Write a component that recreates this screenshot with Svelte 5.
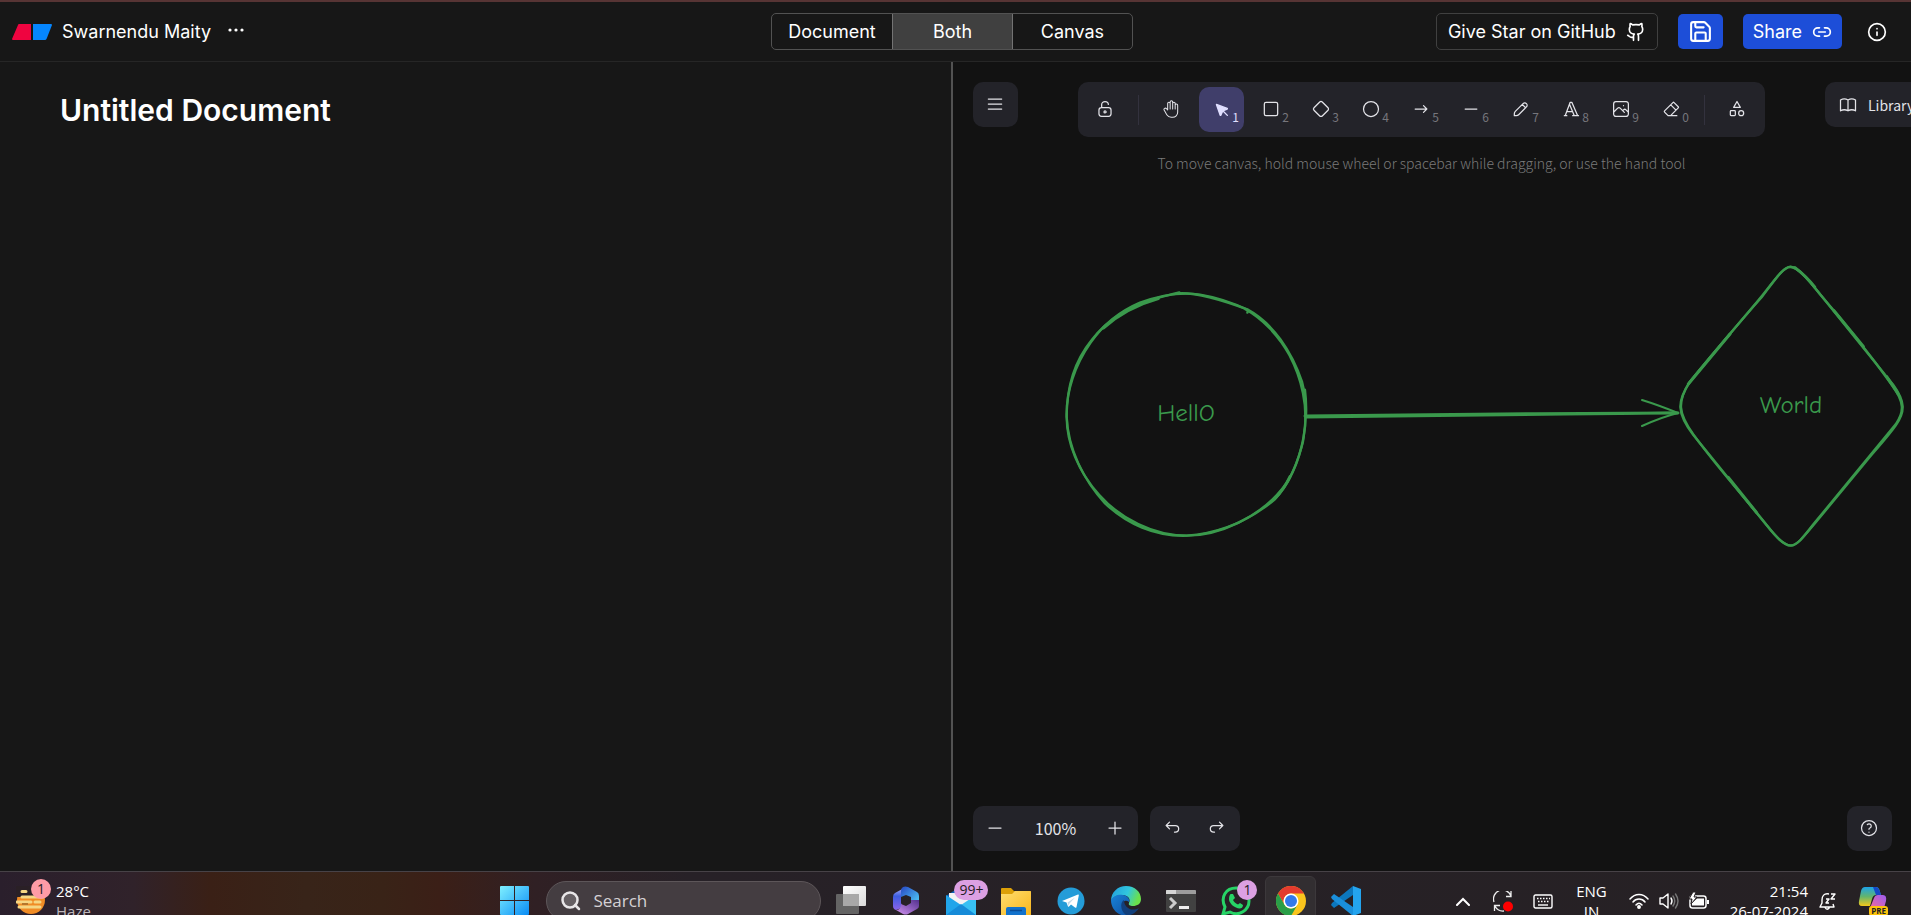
<script>
  let view = $state('Both');
  let tool = $state('Selection');
  const views = ['Document', 'Both', 'Canvas'];

  const tools = [
    { name: 'Selection', key: '1', box: 22, fill: true, d: 'M6 6l4.153 11.793a.365.365 0 0 0 .331.207a.366.366 0 0 0 .332-.207l2.184-4.793l4.787-1.994a.355.355 0 0 0 .213-.323a.355.355 0 0 0-.213-.323zM13.5 13.5l4.5 4.5' },
    { name: 'Rectangle', key: '2', box: 24, d: 'M6 4h12a2 2 0 0 1 2 2v12a2 2 0 0 1-2 2H6a2 2 0 0 1-2-2V6a2 2 0 0 1 2-2z' },
    { name: 'Diamond', key: '3', box: 24, d: 'M10.5 20.4l-6.9-6.9c-.781-.781-.781-2.219 0-3l6.9-6.9c.781-.781 2.219-.781 3 0l6.9 6.9c.781.781.781 2.219 0 3l-6.9 6.9c-.781.781-2.219.781-3 0z' },
    { name: 'Ellipse', key: '4', box: 24, d: 'M12 3a9 9 0 1 0 0 18a9 9 0 1 0 0-18z' },
    { name: 'Arrow', key: '5', box: 20, d: 'M4.167 10h11.666M12.5 13.333L15.833 10M12.5 6.667L15.833 10' },
    { name: 'Line', key: '6', box: 20, d: 'M4.167 10h11.666' },
    { name: 'Draw', key: '7', box: 20, d: 'M7.643 15.69l7.774-7.773a2.357 2.357 0 1 0-3.334-3.334L4.31 12.357a3.333 3.333 0 0 0-.977 2.357v1.953h1.953c.884 0 1.732-.352 2.357-.977ZM11.25 5.417l3.333 3.333' },
    { name: 'Text', key: '8', box: 24, d: 'M4 20h3M14 20h7M6.9 15h6.9M10.2 6.3l5.8 13.7M5 20l6-16h2l7 16' },
    { name: 'Image', key: '9', box: 20, d: 'M12.5 6.667h.01M4.91 2.625h10.18a2.284 2.284 0 0 1 2.285 2.284v10.182a2.284 2.284 0 0 1-2.284 2.284H4.909a2.284 2.284 0 0 1-2.284-2.284V4.909a2.284 2.284 0 0 1 2.284-2.284ZM3.333 12.5l3.334-3.333c.773-.745 1.726-.745 2.5 0l4.166 4.166M11.667 11.667l.833-.834c.774-.744 1.726-.744 2.5 0l1.667 1.667' },
    { name: 'Eraser', key: '0', box: 24, d: 'M19 20h-10.5l-4.21-4.3a1 1 0 0 1 0-1.41l10-10a1 1 0 0 1 1.41 0l5 5a1 1 0 0 1 0 1.41l-9.2 9.3M18 13.3l-6.3-6.3' }
  ];

  const paths = {
    lock: 'M13.542 8.542H6.458a2.5 2.5 0 0 0-2.5 2.5v3.75a2.5 2.5 0 0 0 2.5 2.5h7.084a2.5 2.5 0 0 0 2.5-2.5v-3.75a2.5 2.5 0 0 0-2.5-2.5ZM10 13.958a1.042 1.042 0 1 0 0-2.083a1.042 1.042 0 0 0 0 2.083ZM6.667 8.333V5.417C6.667 3.806 8.159 2.5 10 2.5c1.841 0 3.333 1.306 3.333 2.917',
    hand: 'M8 13v-7.5a1.5 1.5 0 0 1 3 0v6.5M11 5.5v-2a1.5 1.5 0 1 1 3 0v8.5M14 5.5a1.5 1.5 0 0 1 3 0v6.5M17 7.5a1.5 1.5 0 0 1 3 0v8.5a6 6 0 0 1-6 6h-2h.208a6 6 0 0 1-5.012-2.7l-.196-.3c-.312-.479-1.407-2.388-3.286-5.728a1.5 1.5 0 0 1 .536-2.022a1.867 1.867 0 0 1 2.28.28l1.47 1.47',
    shapes: 'M12 3l-4 7h8zM20 17a3 3 0 1 1-6 0a3 3 0 1 1 6 0zM5 14h4a1 1 0 0 1 1 1v4a1 1 0 0 1-1 1H5a1 1 0 0 1-1-1v-4a1 1 0 0 1 1-1z',
    book: 'M3 19a9 9 0 0 1 9 0a9 9 0 0 1 9 0M3 6a9 9 0 0 1 9 0a9 9 0 0 1 9 0M3 6v13M12 6v13M21 6v13',
    menu: 'M4 6h16M4 12h16M4 18h16',
    minus: 'M4 10h12',
    plus: 'M10 4v12M4 10h12',
    undo: 'M7.5 10.833L4.167 7.5L7.5 4.167M4.167 7.5h9.166a3.333 3.333 0 0 1 0 6.667H12.5',
    redo: 'M12.5 10.833L15.833 7.5L12.5 4.167M15.833 7.5H6.667a3.333 3.333 0 1 0 0 6.667H7.5',
    help: 'M12 3a9 9 0 1 0 0 18a9 9 0 1 0 0-18zM12 17v.01M12 13.5a1.5 1.5 0 0 1 1-1.5a2.6 2.6 0 1 0-3-4',
    github: 'M15 22v-4a4.8 4.8 0 0 0-1-3.5c3 0 6-2 6-5.5.08-1.25-.27-2.48-1-3.5.28-1.15.28-2.35 0-3.5 0 0-1 0-3 1.5-2.64-.5-5.36-.5-8 0C6 2 5 2 5 2c-.3 1.15-.3 2.35 0 3.5A5.403 5.403 0 0 0 4 9c0 3.5 3 5.5 6 5.5-.39.49-.68 1.05-.85 1.65-.17.6-.22 1.23-.15 1.85v4M9 18c-4.51 2-5-2-7-2',
    save: 'M15.2 3a2 2 0 0 1 1.4.6l3.8 3.8a2 2 0 0 1 .6 1.4V19a2 2 0 0 1-2 2H5a2 2 0 0 1-2-2V5a2 2 0 0 1 2-2zM17 21v-7a1 1 0 0 0-1-1H8a1 1 0 0 0-1 1v7M7 3v4a1 1 0 0 0 1 1h7',
    link: 'M9 17H7A5 5 0 0 1 7 7h2M15 7h2a5 5 0 1 1 0 10h-2M8 12h8',
    info: 'M12 2a10 10 0 1 0 0 20a10 10 0 1 0 0-20zM12 16v-4M12 8h.01'
  };
</script>

{#snippet icon(d, box = 24, size = 20, weight = 1.5)}
  <svg width={size} height={size} viewBox="0 0 {box} {box}" fill="none" stroke="currentColor" stroke-width={weight} stroke-linecap="round" stroke-linejoin="round" aria-hidden="true"><path {d} /></svg>
{/snippet}

<div class="screen">
  <header>
    <div class="brand">
      <svg width="40" height="16" viewBox="0 0 40 16" aria-hidden="true">
        <path d="M7 0H19V16H1Q0 16 0 15L6 1Q6.300 0 7 0z" fill="#ef0440" />
        <path d="M21 0H39Q40 0 40 1L34.500 15Q34 16 33 16H21z" fill="#0586ff" />
      </svg>
      <span class="owner">Swarnendu Maity</span>
      <button class="plain more" aria-label="More">
        <svg width="16" height="4" viewBox="0 0 16 4" fill="#fff"><circle cx="2" cy="2" r="1.600" /><circle cx="8" cy="2" r="1.600" /><circle cx="14" cy="2" r="1.600" /></svg>
      </button>
    </div>
    <div class="views">
      {#each views as name}
        <button class:active={view === name} onclick={() => (view = name)}>{name}</button>
      {/each}
    </div>
    <div class="actions">
      <a class="star" href="#github">Give Star on GitHub {@render icon(paths.github, 24, 20, 2)}</a>
      <button class="blue save" aria-label="Save">{@render icon(paths.save, 24, 25, 2)}</button>
      <button class="blue share">Share {@render icon(paths.link, 24, 20, 2)}</button>
      <button class="plain info" aria-label="Info">{@render icon(paths.info, 24, 20, 2)}</button>
    </div>
  </header>

  <main>
    <section class="document"><h1>Untitled Document</h1></section>
    <div class="divider"></div>
    <section class="canvas">
      <svg class="drawing" fill="none" stroke="#3a994c" stroke-linecap="round" stroke-linejoin="round">
        <svg x="87" y="208" width="300" height="280" viewBox="0 0 900 840" stroke-width="7">
          <path d="M402 72C450 62 530 84 622 118C700 160 755 245 786 335C802 395 800 450 789 515C775 570 755 620 728 655C660 740 540 797 440 797C340 797 240 745 178 675C115 605 80 520 80 440C80 350 106 270 155 210C205 145 280 105 345 86C375 78 395 73 418 67" />
          <path d="M622 128L624 120C590 104 530 82 480 74C420 65 360 76 300 98C230 128 185 170 152 218C105 285 78 365 80 440C84 535 130 630 195 700C260 762 345 800 440 797C540 790 630 750 702 690C745 645 776 580 791 500C808 410 782 320 748 255C715 195 665 145 616 118" />
          <path d="M355 86C290 104 235 135 190 174M794 360Q799 400 797 440M750 620C737 648 720 670 704 687" stroke-width="9" />
        </svg>
        <path d="M352 354C480 353 600 351 725 351M353 355C490 353 600 352 722 351" stroke-width="3" />
        <path d="M689 338C702 342 715 347 725 351C713 354 700 359 689 364" stroke-width="2" />
        <svg x="667" y="188" width="291" height="310" viewBox="0 0 873 930" stroke-width="7">
          <path d="M420 145C465 88 490 51 511 51C532 51 560 82 598 130L820 405C856 455 856 485 828 525C800 565 770 595 740 632L585 820C550 862 530 887 512 887C493 887 470 864 440 826L220 555C170 490 170 455 210 395C260 330 350 230 420 145z" />
          <path d="M425 142C468 85 492 49 512 50C535 53 564 87 600 133C680 225 740 300 818 408C852 455 854 485 827 523L580 823C550 862 530 888 512 886C490 886 468 860 440 825C370 738 290 650 220 553C173 488 173 455 207 399C270 325 350 225 425 142z" />
          <path d="M525 53C550 72 570 93 584 111M642 182L730 289M800 380L834 431M205 402L330 252M325 682L410 788" stroke-width="9" />
        </svg>
        <g class="labels" fill="#3a994c" stroke="none" text-anchor="middle">
          <text x="233" y="359">HellO</text>
          <text x="838" y="351">World</text>
        </g>
      </svg>

      <div class="canvas-top">
        <button class="island square" aria-label="Menu">{@render icon(paths.menu)}</button>
        <div class="tool-area">
          <div class="island toolbar">
            <button class="tool" aria-label="Lock">{@render icon(paths.lock, 20, 20, 1.25)}</button>
            <span class="separator"></span>
            <button class="tool" aria-label="Hand">{@render icon(paths.hand, 24, 20, 1.25)}</button>
            {#each tools as t}
              <button class="tool" class:active={tool === t.name} class:filled={t.fill} aria-label={t.name} onclick={() => (tool = t.name)}>
                {@render icon(t.d, t.box, 20, t.box === 20 ? 1.25 : 1.5)}<small>{t.key}</small>
              </button>
            {/each}
            <span class="separator"></span>
            <button class="tool" aria-label="More tools">{@render icon(paths.shapes)}</button>
          </div>
          <p>To move canvas, hold mouse wheel or spacebar while dragging, or use the hand tool</p>
        </div>
        <button class="island library">{@render icon(paths.book)} Library</button>
      </div>

      <div class="canvas-bottom">
        <div class="island group">
          <button class="tool" aria-label="Zoom out">{@render icon(paths.minus, 20, 20, 1.25)}</button>
          <button class="percent">100%</button>
          <button class="tool" aria-label="Zoom in">{@render icon(paths.plus, 20, 20, 1.25)}</button>
        </div>
        <div class="island group">
          <button class="tool" aria-label="Undo">{@render icon(paths.undo, 20, 20, 1.25)}</button>
          <button class="tool" aria-label="Redo">{@render icon(paths.redo, 20, 20, 1.25)}</button>
        </div>
        <button class="island square help" aria-label="Help">{@render icon(paths.help)}</button>
      </div>
    </section>
  </main>

  <footer>
    <div class="taskbar">
      <button class="weather">
        <span class="weather-icon">
          <svg width="30" height="30" viewBox="0 0 30 30">
            <circle cx="15" cy="14" r="14" fill="#f08c25" />
            <path d="M0 0H30V11H0z" fill="#2a2026" />
            <path d="M6 5.500H10M6 11H27M1 16H15M19 16H24M3 21H24" stroke="#f5d683" stroke-width="3" stroke-linecap="round" />
            <path d="M6 18H12" stroke="#b5762b" stroke-width="2" />
          </svg>
          <span class="badge pink">1</span>
        </span>
        <span class="weather-text"><span>28°C</span><span class="dim">Haze</span></span>
      </button>

      <div class="apps">
        <button class="app" aria-label="Start">
          <svg width="30" height="30" viewBox="0 0 30 30">
            <defs><linearGradient id="win" x1="0" y1="0" x2="1" y2="1"><stop stop-color="#7ff0ff" /><stop offset="1" stop-color="#0a8cf5" /></linearGradient></defs>
            <path d="M0 1Q0 0 1 0H14V14H0zM15 0H28Q29 0 29 1V14H15zM0 15H14V29H1Q0 29 0 28zM15 15H29V28Q29 29 28 29H15z" fill="url(#win)" />
          </svg>
        </button>
        <label class="search">
          <svg width="20" height="20" viewBox="0 0 20 20" fill="none" stroke="#e8e6e8" stroke-width="2.500" stroke-linecap="round"><circle cx="9" cy="9" r="7.500" fill="#655f63" /><path d="M14 14L18 18" /></svg>
          <input type="text" placeholder="Search" aria-label="Search" />
        </label>
        <button class="app" aria-label="Task view">
          <svg width="30" height="30" viewBox="0 0 30 30">
            <defs><linearGradient id="tv" x1="0" y1="0" x2="1" y2="1"><stop stop-color="#fff" /><stop offset="1" stop-color="#dadada" /></linearGradient></defs>
            <rect y="8" width="23" height="20" rx="1" fill="#646464" /><rect x="7" y="0" width="23" height="20" rx="1" fill="url(#tv)" /><rect x="7" y="8" width="16" height="12" fill="#a8a8a8" />
          </svg>
        </button>
        <button class="app" aria-label="Microsoft 365">
          <svg width="28" height="30" viewBox="0 0 28 30">
            <defs><linearGradient id="m1" x1="0" y1="0" x2="0" y2="1"><stop stop-color="#b7b9fb" /><stop offset="0.400" stop-color="#3c5de0" /><stop offset="1" stop-color="#8a63e8" /></linearGradient><linearGradient id="m2" x1="0" y1="0" x2="1" y2="1"><stop stop-color="#2748c4" /><stop offset="1" stop-color="#53d3fa" /></linearGradient><linearGradient id="m3" x1="0" y1="1" x2="1" y2="0"><stop stop-color="#d294f0" /><stop offset="1" stop-color="#53308f" /></linearGradient></defs>
            <path d="M14 1L3 7Q1 8 1 11V20Q1 23 4 24L12 21Q9 19 9 17V8Q9 4 14 1z" fill="url(#m1)" />
            <path d="M11 1Q13 0 16 1L25 6Q27 7 27 10V19L19 15V11L14 9L9 11V5Q9 2 11 1z" fill="url(#m2)" />
            <path d="M27 14V20Q27 22 25 23L16 28Q14 29 11 28L4 24Q9 24 9 18L14 20L19 17V14z" fill="url(#m3)" />
          </svg>
        </button>
        <button class="app" aria-label="Mail">
          <svg width="30" height="30" viewBox="0 0 30 30">
            <path d="M0 10L15 0L30 10V28H0z" fill="#0b62b8" /><path d="M3 7H27V20H3z" fill="#f2f2f4" />
            <path d="M0 9L15 19L0 30z" fill="#21a5ea" /><path d="M30 9L15 19L30 30z" fill="#38c0f3" /><path d="M0 29L15 18L30 29V30H0z" fill="#168bd8" />
          </svg>
          <span class="badge violet wide">99+</span>
        </button>
        <button class="app" aria-label="Explorer">
          <svg width="30" height="30" viewBox="0 0 30 30">
            <defs><linearGradient id="fold" x1="0" y1="0" x2="1" y2="1"><stop stop-color="#ffde70" /><stop offset="1" stop-color="#f9b51b" /></linearGradient></defs>
            <path d="M0 3Q0 2 1 2H10L13 5H29Q30 5 30 6V14H0z" fill="#dda008" /><path d="M0 8H11L14 5H29Q30 5 30 6V30H0z" fill="url(#fold)" />
            <path d="M5 30V23Q5 21 7 21H23Q25 21 25 23V30z" fill="#1272cc" /><path d="M9 24.500H21" stroke="#0a4c96" stroke-width="1.500" />
          </svg>
        </button>
        <button class="app" aria-label="Telegram">
          <svg width="28" height="28" viewBox="0 0 28 28"><circle cx="14" cy="14" r="13.500" fill="#249cd8" /><path d="M5 14L21 7.500Q22 7.200 21.800 8.500L19.500 20Q19.200 21.300 18 20.600L14 17.500L12 19.500Q11 20.300 10.800 19L9.500 15.500z" fill="#fff" /><path d="M10.500 15.500L18 10.500L12.500 16.500L11.500 19z" fill="#c3d9e8" /></svg>
        </button>
        <button class="app" aria-label="Edge">
          <svg width="30" height="30" viewBox="0 0 30 30">
            <defs><linearGradient id="e1" x1="0" y1="0" x2="1" y2="0.300"><stop stop-color="#219bdc" /><stop offset="0.600" stop-color="#31c7de" /><stop offset="1" stop-color="#6ae04c" /></linearGradient><linearGradient id="e2" x1="0" y1="0" x2="1" y2="1"><stop stop-color="#1883d8" /><stop offset="1" stop-color="#104e9e" /></linearGradient></defs>
            <path d="M0 15C0 6 7 0 15 0C24 0 30 6 30 13C30 18 26 20 22 20C19 20 17 19 18 17C20 13 17 9 11 9C6 9 2 11 0 15z" fill="url(#e1)" />
            <path d="M0 14C3 9 8 8 12 9C17 10 19 13 18 16C14 13 11 16 11 20C11 25 15 28 20 28C17 31 12 30 8 28C3 25 0 20 0 14z" fill="url(#e2)" />
            <path d="M13 14C9 16 9 25 15 29C20 30 25 27 28 22C21 26 13 22 13 14z" fill="#123f7b" />
          </svg>
        </button>
        <button class="app" aria-label="Terminal">
          <svg width="30" height="22" viewBox="0 0 30 22"><rect width="30" height="22" rx="1" fill="#414141" /><path d="M0 4V1Q0 0 1 0H29Q30 0 30 1V4z" fill="#9d9d9d" /><path d="M0 4V1Q0 0 1 0H10V4z" fill="#d5d5d5" /><path d="M4 8L9 13L4 18" stroke="#ccc" stroke-width="3" fill="none" /><path d="M13 17.500H23" stroke="#eee" stroke-width="3" /></svg>
        </button>
        <button class="app" aria-label="WhatsApp">
          <svg width="30" height="30" viewBox="0 0 30 30"><path d="M2 28L4 21C-1 11 5 2 15 2C23 2 28 8 28 15C28 24 18 31 9 26z" fill="none" stroke="#27d366" stroke-width="3" /><path d="M10 8L12 8L14 12L12 14C13 16 15 18 17 18.500L19 17L22 19C22 23 18 23 15 21.500C11 20 8 16 8 13C8 10 9 8 10 8z" fill="#27d366" /></svg>
          <span class="badge violet">1</span>
        </button>
        <button class="app current" aria-label="Chrome">
          <svg width="30" height="30" viewBox="0 0 30 30"><circle cx="15" cy="15" r="15" fill="#fac51d" /><path d="M2 7.500A15 15 0 0 1 28 7.500H15A7.500 7.500 0 0 0 8.500 18.700z" fill="#e33b2e" /><path d="M2 7.500A15 15 0 0 0 15 30L21.500 18.700A7.500 7.500 0 0 1 8.500 18.700z" fill="#2a9e48" /><circle cx="15" cy="15" r="7.500" fill="#fff" /><circle cx="15" cy="15" r="6" fill="#3279ea" /></svg>
        </button>
        <button class="app" aria-label="Visual Studio Code">
          <svg width="30" height="30" viewBox="0 0 30 30"><path d="M22 0L30 3V27L22 30z" fill="#24a4ee" /><path d="M22 0V9L3 22L0 19L1 17z" fill="#0c77bd" /><path d="M22 30V21L3 8L0 11L1 13z" fill="#1a8fdb" /></svg>
        </button>
      </div>

      <div class="tray">
        <button class="plain" aria-label="Hidden icons"><svg width="14" height="9" viewBox="0 0 14 9" fill="none" stroke="#fff" stroke-width="2" stroke-linecap="round"><path d="M1 8L7 2L13 8" /></svg></button>
        <button class="plain sync" aria-label="Update"><svg width="21" height="21" viewBox="0 0 21 21" fill="none" stroke="#eee" stroke-width="1.300"><path d="M1 11A9 9 0 0 1 18 5M18 0V5.500H13M7 14.500H1.500V20M2 15A9 9 0 0 0 11 20" /><circle cx="15" cy="15.500" r="5" fill="#f00" stroke="none" /></svg></button>
        <button class="plain keyboard" aria-label="Touch keyboard"><svg width="20" height="15" viewBox="0 0 20 15" fill="none" stroke="#fff" stroke-width="1.400"><rect x="1" y="1" width="18" height="13" rx="1.500" /><path d="M4 4.500H17M5 7.500H17" stroke-dasharray="1.500 1.500" /><path d="M5 11H15" /></svg></button>
        <button class="plain language"><span>ENG</span><span>IN</span></button>
        <button class="plain status" aria-label="Network, sound and battery">
          <svg width="20" height="16" viewBox="0 0 20 16" fill="none" stroke="#fff" stroke-width="1.500" stroke-linecap="round"><path d="M1 6C6 0 14 0 19 6M4 9C7 5 13 5 16 9M7 12C9 9.500 11 9.500 13 12" /><circle cx="10" cy="14" r="1.200" fill="#fff" /></svg>
          <svg width="20" height="18" viewBox="0 0 20 18" fill="none" stroke="#fff" stroke-width="1.400" stroke-linejoin="round" stroke-linecap="round"><path d="M1 6H4L9 2V16L4 12H1z" /><path d="M12 6Q14 9 12 12" /><path d="M14 4Q17.500 9 14 14M16.500 2Q21.500 9 16.500 16" stroke="#777" /></svg>
          <svg width="21" height="18" viewBox="0 0 21 18"><rect x="1" y="4" width="16" height="12" rx="2.500" fill="none" stroke="#fff" stroke-width="1.500" /><path d="M8 6.500H15V13.500H3V11z" fill="#fff" /><path d="M18 8H20V12H18z" fill="#fff" /><path d="M4 0L0 7H3L2 12L8 5H5L7 0z" fill="#fff" stroke="#272124" /></svg>
        </button>
        <button class="plain clock"><span>21:54</span><span>26-07-2024</span></button>
        <button class="plain bell" aria-label="Notifications"><svg width="18" height="19" viewBox="0 0 18 19" fill="none" stroke="#fff" stroke-width="1.400" stroke-linejoin="round"><path d="M10 2C5 1 3 4 3 8V11L1 15H15L14 12M6 15.500Q8 19 10.500 15.500M7 7H10L7 11H10M12 2H16L12 7H16" /></svg></button>
        <button class="plain copilot" aria-label="Copilot">
          <svg width="30" height="30" viewBox="0 0 30 30">
            <defs><linearGradient id="c1" x1="0" y1="0" x2="0" y2="1"><stop stop-color="#1da3e8" /><stop offset="0.500" stop-color="#62b56e" /><stop offset="1" stop-color="#f4c91a" /></linearGradient><linearGradient id="c2" x1="1" y1="0" x2="0" y2="1"><stop stop-color="#9b5cf0" /><stop offset="1" stop-color="#f06a9b" /></linearGradient></defs>
            <path d="M7 1H18Q21 1 22 6L23 9H18Q15 9 14 13L12 20H4Q0 20 1 15L3 5Q4 1 7 1z" fill="url(#c1)" /><path d="M15 1H18Q21 1 23 9H18z" fill="#1549c7" />
            <path d="M20 9H25Q29 9 28 15L26 22H12L16 12Q17 9 20 9z" fill="url(#c2)" />
          </svg>
          <span class="pre">PRE</span>
        </button>
      </div>
    </div>
  </footer>
</div>

<style>
  :global(body) { margin: 0; background: #171717; }
  * { box-sizing: border-box; }
  svg { display: block; flex: none; }
  button { margin: 0; padding: 0; border: 0; background: none; color: inherit; font: inherit; cursor: pointer; }
  .screen { height: 100vh; display: flex; flex-direction: column; overflow: hidden; color: #fff; font-family: Inter, sans-serif; }

  header { flex: none; height: 62px; display: grid; grid-template-columns: 1fr auto 1fr; align-items: center; padding: 0 19px 0 12px; border-top: 2px solid #573434; border-bottom: 1px solid #262626; background: #171717; font-size: 18px; font-weight: 400; line-height: 28px; }
  .brand, .actions { display: flex; align-items: center; }
  .owner { margin-left: 10px; }
  .plain { display: flex; align-items: center; justify-content: center; }
  .more { margin-left: 12px; padding: 4px 5px 8px; }
  .views { display: grid; grid-template-columns: repeat(3, 1fr); width: 362px; height: 37px; border: 1px solid #525252; border-radius: 5px; overflow: hidden; }
  .views button + button { border-left: 1px solid #737373; }
  .views .active { background: #404040; }
  .actions { justify-content: flex-end; gap: 20px; }
  .star { display: flex; align-items: center; gap: 10px; height: 37px; padding: 0 11px; border: 1px solid #404040; border-radius: 5px; color: inherit; text-decoration: none; }
  .blue { display: flex; align-items: center; justify-content: center; gap: 10px; height: 35px; padding: 0 10px; border-radius: 5px; background: #1d4ed8; }
  .info { padding: 5px; }

  main { flex: 1; min-height: 0; display: grid; grid-template-columns: 951fr 2px 958fr; }
  .document { background: #171717; padding: 30px 60px; }
  h1 { margin: 0; font-size: 30px; line-height: 36px; font-weight: 600; }
  .divider { background: #525252; }
  .canvas { position: relative; min-width: 0; overflow: hidden; display: flex; flex-direction: column; justify-content: space-between; padding: 20px 19px 20px 20px; background: #121212; color: #e3e3e8; font-family: "Noto Sans CJK SC", "Noto Sans", sans-serif; }
  .drawing { position: absolute; inset: 0; width: 100%; height: 100%; }
  .labels { font-family: "Comic Neue", "Noto Sans CJK SC", sans-serif; font-size: 25px; font-weight: 400; }
  .canvas-top, .canvas-bottom { position: relative; display: flex; align-items: flex-start; }
  .canvas-top { gap: 60px; }
  .canvas-bottom { gap: 12px; }
  .island { flex: none; display: flex; align-items: center; border-radius: 10px; background: #232329; }
  .square { width: 45px; height: 45px; justify-content: center; padding: 0 1px 1px 0; }
  .toolbar { gap: 5px; padding: 5px; }
  .tool { position: relative; width: 45px; height: 45px; display: flex; align-items: center; justify-content: center; padding: 0 1px 1px 0; border-radius: 10px; }
  .tool.active { background: #403e6a; color: #e0dfff; }
  .filled :global(svg) { fill: currentColor; }
  .tool small { position: absolute; right: 5px; bottom: 7px; color: #76767c; font-size: 12px; line-height: 16px; }
  .tool.active small { color: #e0dfff; }
  .separator { width: 1px; height: 30px; margin: 0 5px; background: #33323e; }
  .tool-area { flex: none; }
  p { margin: 16px 0 0; text-align: center; color: #7a7a7a; font-size: 14px; font-weight: 300; line-height: 20px; }
  .library { height: 45px; gap: 10px; padding: 0 13px; font-size: 14px; white-space: nowrap; }
  .percent { width: 75px; height: 45px; padding-bottom: 2px; font-size: 16px; }
  .help { margin-left: auto; }

  footer { flex: none; height: 44px; overflow: hidden; border-top: 1px solid #474247; background: linear-gradient(90deg, #2a1f2c 0, #30222a 7%, #3a2016 11%, #382419 16%, #392317 20%, #3b1f17 23%, #302024 28%, #272127 36%, #262124 100%); font-family: "Open Sans", sans-serif; font-size: 15px; line-height: 20px; }
  .taskbar { height: 58px; display: grid; grid-template-columns: minmax(0, 487fr) auto minmax(0, 537fr); align-items: center; }
  .weather { display: flex; align-items: center; gap: 10px; padding-left: 16px; text-align: left; justify-self: start; }
  .weather-icon { position: relative; }
  .weather-text, .language, .clock { display: flex; flex-direction: column; }
  .dim { color: #bdb7bb; }
  .badge { position: absolute; display: flex; align-items: center; justify-content: center; height: 20px; min-width: 20px; border-radius: 10px; color: #241c24; font-size: 14px; line-height: 20px; }
  .pink { top: -7px; right: -5px; background: #ff9ba6; }
  .violet { top: 4px; right: 6px; background: #dca0e3; }
  .wide { right: 0; width: 34px; }
  .apps { display: flex; align-items: center; }
  .app { position: relative; width: 55px; height: 50px; display: flex; align-items: center; justify-content: center; }
  .current::before { content: ""; position: absolute; inset: 0 2px; border: 1px solid #3c383b; border-radius: 6px; background: #322e31; }
  .current svg { position: relative; }
  .search { display: flex; align-items: center; gap: 12px; width: 275px; height: 40px; margin: 0 2px 0 4px; padding: 0 14px; border: 1px solid #5d5659; border-radius: 20px; background: #443d41; }
  .search input { flex: 1; min-width: 0; border: 0; padding: 0; outline: 0; background: none; color: #fff; font: 17px/24px "Open Sans", sans-serif; }
  .search input::placeholder { color: #d5d1d4; opacity: 1; }
  .tray { display: flex; align-items: center; justify-content: flex-end; padding-right: 23px; }
  .sync { margin-left: 23px; }
  .keyboard { margin-left: 19px; }
  .language { margin-left: 23px; }
  .status { margin-left: 22px; gap: 10px; }
  .clock { margin-left: 20px; align-items: flex-end; }
  .bell { margin-left: 11px; }
  .copilot { position: relative; margin-left: 21px; }
  .pre { position: absolute; right: 0; top: 20px; padding: 0 2px; border-radius: 3px; background: #fdc30a; color: #222; font-size: 8px; line-height: 10px; font-weight: 700; }
</style>
